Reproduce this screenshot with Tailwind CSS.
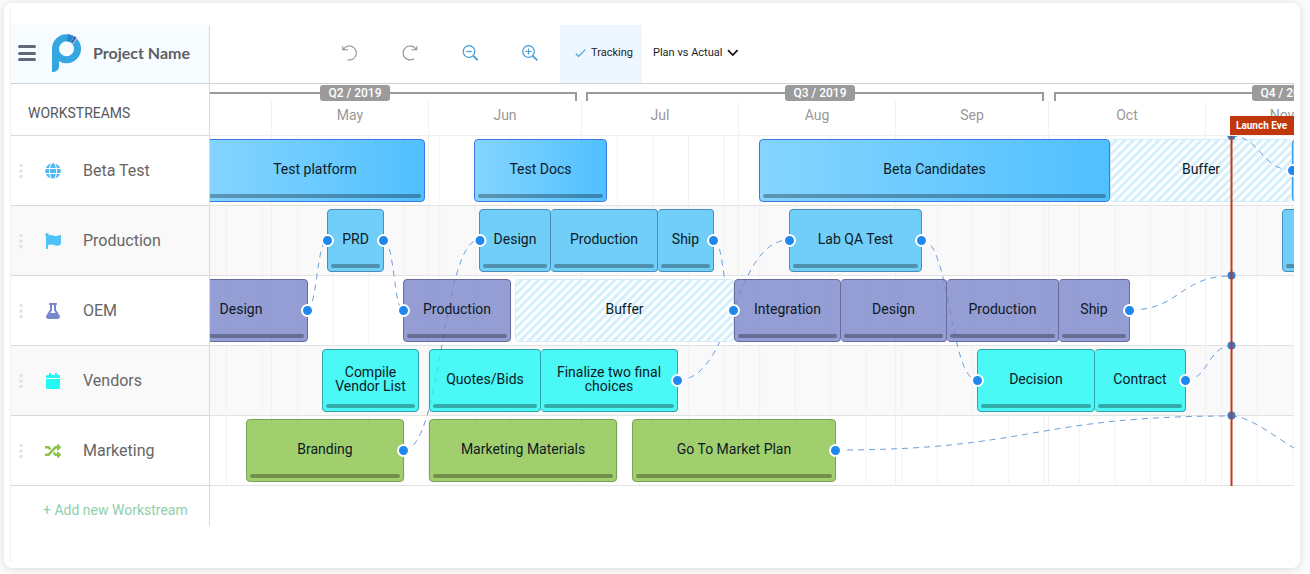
<!DOCTYPE html>
<html lang="en">
<head>
<meta charset="utf-8">
<title>Project Name – Workstreams</title>
<script src="https://cdn.jsdelivr.net/npm/@tailwindcss/browser@4"></script>
</head>
<body class="flex min-h-screen bg-[#fdfdfd] pt-[3px] pr-[10px] pb-[6px] pl-1 font-['Roboto',sans-serif]">
<main class="flex min-w-0 flex-1 rounded-lg bg-white py-[6px] pr-[6px] pl-[6px] shadow-[0_1px_10px_rgba(0,0,0,0.16)]">
<div class="flex min-w-0 flex-1 items-start border-l border-[#efefef] pt-4">

  <!-- Workstream list -->
  <aside class="w-[199px] shrink-0 border-r border-[#d9d9d9]">
    <header class="flex h-[59px] items-center border-b border-[#d0d3d5] bg-[#f6fcff] pb-[2px] pl-[7px]">
      <button type="button" aria-label="Menu" class="flex h-4 w-[18px] flex-col justify-between">
        <span class="h-[3px] w-full rounded-sm bg-[#63697a]"></span>
        <span class="h-[3px] w-full rounded-sm bg-[#63697a]"></span>
        <span class="h-[3px] w-full rounded-sm bg-[#63697a]"></span>
      </button>
      <svg class="ml-4 h-[38px] w-[29px]" viewBox="0 0 29 38" aria-hidden="true">
        <path fill="#36a6e0" d="M0 14.500H7V32C7 36 4 38 0 38Z"/>
        <circle cx="14.500" cy="14.700" r="11" fill="none" stroke="#36a6e0" stroke-width="7"/>
        <path d="M15.500 3.800A11 11 0 0 1 20 5.300" fill="none" stroke="#2a86cc" stroke-width="7"/>
        <path fill="#4c4a9c" d="M24.800 3.800L21.300 9.500L19.200 7.500C21 6.500 22 5 22.300 2.300Z"/>
        <path d="M24.900 3.600L20.600 10.200" stroke="#f6fcff" stroke-width=".8"/>
      </svg>
      <h1 class="ml-3 font-['Lato',sans-serif] text-base font-bold text-[#5e6063]">Project Name</h1>
    </header>
    <h2 class="flex h-[52px] items-center border-b border-[#d9d9d9] pt-[6px] pl-[17px] text-sm text-[#55585c]">WORKSTREAMS</h2>
    <ul class="text-base text-[#666]">
      <li class="flex h-[70px] items-center border-b border-[#d9d9d9] pl-2">
        <svg class="h-4 w-1" viewBox="0 0 4 16" fill="#e3e3e3" aria-hidden="true"><circle cx="2" cy="2.500" r="1.800"/><circle cx="2" cy="8" r="1.800"/><circle cx="2" cy="13.500" r="1.800"/></svg>
        <svg class="ml-[22px] size-4" viewBox="0 0 496 512" fill="#4fb8f5" aria-hidden="true"><path d="M336.500 160C322 70.700 287.800 8 248 8s-74 62.700-88.500 152h177zM152 256c0 22.200 1.200 43.500 3.300 64h185.300c2.100-20.500 3.300-41.800 3.300-64s-1.200-43.500-3.300-64H155.300c-2.100 20.500-3.300 41.800-3.300 64zm324.700-96c-28.600-67.900-86.500-120.400-158-141.600 24.400 33.800 41.200 84.700 50 141.600h108zM177.200 18.400C105.800 39.600 47.800 92.100 19.300 160h108c8.700-56.900 25.500-107.800 49.900-141.600zM487.400 192H372.700c2.100 21 3.300 42.500 3.300 64s-1.200 43-3.300 64h114.600c5.500-20.500 8.600-41.800 8.600-64s-3.100-43.500-8.500-64zM120 256c0-21.500 1.200-43 3.300-64H8.600C3.200 212.500 0 233.800 0 256s3.200 43.500 8.600 64h114.600c-2-21-3.200-42.500-3.200-64zm39.500 96c14.500 89.300 48.700 152 88.500 152s74-62.700 88.500-152h-177zm159.300 141.600c71.400-21.200 129.400-73.700 158-141.600h-108c-8.800 56.900-25.600 107.800-50 141.600zM19.300 352c28.600 67.900 86.500 120.400 158 141.600-24.400-33.800-41.200-84.700-50-141.600h-108z"/></svg>
        <span class="ml-[22px]">Beta Test</span>
      </li>
      <li class="flex h-[70px] items-center border-b border-[#d9d9d9] bg-[#f9f9f9] pl-2">
        <svg class="h-4 w-1" viewBox="0 0 4 16" fill="#e3e3e3" aria-hidden="true"><circle cx="2" cy="2.500" r="1.800"/><circle cx="2" cy="8" r="1.800"/><circle cx="2" cy="13.500" r="1.800"/></svg>
        <svg class="ml-[22px] size-4" viewBox="0 0 512 512" fill="#4fc3f7" aria-hidden="true"><path d="M349.565 98.783C295.978 98.783 251.721 64 184.348 64c-24.955 0-47.309 4.384-68.045 12.013a55.947 55.947 0 0 0 3.586-23.562C118.117 24.015 94.806 1.206 66.338.048 34.345-1.254 8 24.296 8 56c0 19.026 9.497 35.825 24 45.945V488c0 13.255 10.745 24 24 24h16c13.255 0 24-10.745 24-24v-94.400c28.311-12.064 63.582-22.122 114.435-22.122 53.588 0 97.844 34.783 165.217 34.783 48.169 0 86.667-16.294 122.505-40.858C506.840 359.452 512 349.571 512 339.045v-243.100c0-23.393-24.269-38.870-45.485-29.016-34.338 15.948-76.454 31.854-116.950 31.854z"/></svg>
        <span class="ml-[22px]">Production</span>
      </li>
      <li class="flex h-[70px] items-center border-b border-[#d9d9d9] pl-2">
        <svg class="h-4 w-1" viewBox="0 0 4 16" fill="#e3e3e3" aria-hidden="true"><circle cx="2" cy="2.500" r="1.800"/><circle cx="2" cy="8" r="1.800"/><circle cx="2" cy="13.500" r="1.800"/></svg>
        <svg class="ml-[22px] size-4" viewBox="0 0 448 512" fill="#7986cb" aria-hidden="true"><path d="M437.200 403.500L320 215V64h8c13.300 0 24-10.700 24-24V24c0-13.300-10.700-24-24-24H120c-13.300 0-24 10.700-24 24v16c0 13.300 10.700 24 24 24h8v151L10.800 403.500C-18.500 450.600 15.300 512 70.900 512h306.200c55.700 0 89.400-61.500 60.100-108.500zM137.900 320l48.200-77.600c3.700-5.200 5.800-11.600 5.800-18.400V64h64v160c0 6.900 2.200 13.200 5.800 18.400l48.200 77.600h-172z"/></svg>
        <span class="ml-[22px]">OEM</span>
      </li>
      <li class="flex h-[70px] items-center border-b border-[#d9d9d9] bg-[#f9f9f9] pl-2">
        <svg class="h-4 w-1" viewBox="0 0 4 16" fill="#e3e3e3" aria-hidden="true"><circle cx="2" cy="2.500" r="1.800"/><circle cx="2" cy="8" r="1.800"/><circle cx="2" cy="13.500" r="1.800"/></svg>
        <svg class="ml-[22px] size-4" viewBox="0 0 448 512" fill="#22f7f5" aria-hidden="true"><path d="M12 192h424c6.600 0 12 5.400 12 12v260c0 26.500-21.500 48-48 48H48c-26.500 0-48-21.500-48-48V204c0-6.600 5.400-12 12-12zm436-44v-36c0-26.500-21.500-48-48-48h-48V12c0-6.600-5.400-12-12-12h-40c-6.600 0-12 5.400-12 12v52H160V12c0-6.600-5.400-12-12-12h-40c-6.600 0-12 5.400-12 12v52H48C21.500 64 0 85.500 0 112v36c0 6.600 5.400 12 12 12h424c6.600 0 12-5.400 12-12z"/></svg>
        <span class="ml-[22px]">Vendors</span>
      </li>
      <li class="flex h-[70px] items-center border-b border-[#d9d9d9] pl-2">
        <svg class="h-4 w-1" viewBox="0 0 4 16" fill="#e3e3e3" aria-hidden="true"><circle cx="2" cy="2.500" r="1.800"/><circle cx="2" cy="8" r="1.800"/><circle cx="2" cy="13.500" r="1.800"/></svg>
        <svg class="ml-[22px] size-4" viewBox="0 0 512 512" fill="#8bc34a" aria-hidden="true"><path d="M504.971 359.029c9.373 9.373 9.373 24.569 0 33.941l-80 79.984c-15.010 15.010-40.971 4.490-40.971-16.971V416h-58.785a12.004 12.004 0 0 1-8.773-3.812l-70.556-75.596 53.333-57.143L352 336h32v-39.981c0-21.438 25.943-31.998 40.971-16.971l80 79.981zM12 176h84l52.781 56.551 53.333-57.143-70.556-75.596A11.999 11.999 0 0 0 122.785 96H12c-6.627 0-12 5.373-12 12v56c0 6.627 5.373 12 12 12zm372 0v39.984c0 21.460 25.961 31.980 40.971 16.971l80-79.984c9.373-9.373 9.373-24.569 0-33.941l-80-79.981C409.943 24.021 384 34.582 384 56.019V96h-58.785a12.004 12.004 0 0 0-8.773 3.812L96 336H12c-6.627 0-12 5.373-12 12v56c0 6.627 5.373 12 12 12h110.785c3.326 0 6.503-1.381 8.773-3.812L352 176h32z"/></svg>
        <span class="ml-[22px]">Marketing</span>
      </li>
    </ul>
    <div class="flex h-10 items-end pl-8">
      <button type="button" class="pb-[6px] text-sm text-[#8fd0ab]">+ Add new Workstream</button>
    </div>
  </aside>

  <section class="min-w-0 flex-1">
    <!-- Toolbar -->
    <div class="flex h-[59px] border-b border-[#d0d3d5] pl-[110px] text-[11px] text-[#1c2226]">
      <button type="button" aria-label="Undo" class="flex w-[60px] items-center justify-center pb-[2px]">
        <svg class="size-4" viewBox="0 0 16 16" fill="none" stroke="#8d8f92" stroke-width="1.100" aria-hidden="true"><path d="M1.500 4.200A7 7 0 1 1 5.500 14.800M.8 1.200V4.800H6"/></svg>
      </button>
      <button type="button" aria-label="Redo" class="flex w-[60px] items-center justify-center pb-[2px]">
        <svg class="size-4" viewBox="0 0 16 16" fill="none" stroke="#8d8f92" stroke-width="1.100" aria-hidden="true"><path d="M14 4.200A7 7 0 1 0 12 13.800M14.800 1.200V4.800H9.500"/></svg>
      </button>
      <button type="button" aria-label="Zoom out" class="flex w-[60px] items-center justify-center pb-[2px]">
        <svg class="size-4" viewBox="0 0 16 16" fill="none" stroke="#3f9bdc" stroke-width="1.200" aria-hidden="true"><circle cx="7" cy="6.500" r="5.800"/><path d="M4.300 6.500H9.700"/><path d="M11.300 10.800L15.800 15.300" stroke-width="1.700"/></svg>
      </button>
      <button type="button" aria-label="Zoom in" class="flex w-[60px] items-center justify-center pb-[2px]">
        <svg class="size-4" viewBox="0 0 16 16" fill="none" stroke="#3f9bdc" stroke-width="1.200" aria-hidden="true"><circle cx="6.500" cy="6.500" r="5.800"/><path d="M3.500 6.500H9.500M6.500 3.500V9.500"/><path d="M10.800 10.800L15.300 15.300" stroke-width="1.700"/></svg>
      </button>
      <button type="button" aria-pressed="true" class="flex w-[82px] items-center gap-[5px] bg-[#eef7ff] pb-[2px] pl-[15px]">
        <svg class="h-3 w-[11px]" viewBox="0 0 11 12" fill="none" stroke="#4aa3df" stroke-width="1.300" aria-hidden="true"><path d="M.8 6.800L3.600 9.400L10.300 2.600"/></svg>
        Tracking
      </button>
      <label class="flex items-center gap-1 pb-[2px] pl-[11px]">
        <select aria-label="View" class="appearance-none bg-transparent"><option>Plan vs Actual</option></select>
        <svg class="h-2 w-3" viewBox="0 0 12 8" fill="none" stroke="#111" stroke-width="1.700" aria-hidden="true"><path d="M1 1.200L5.800 6L10.600 1.200"/></svg>
      </label>
    </div>

    <div class="relative overflow-hidden">
      <!-- Quarters and months -->
      <div class="flex h-[52px] flex-col overflow-hidden pt-2">
        <div class="flex h-[9px] shrink-0 text-xs font-medium whitespace-nowrap text-white">
          <div class="flex w-[367px] shrink-0 border-t-2 border-r-2 border-[#9b9b9b]"><span class="-mt-[9px] ml-[110px] h-4 w-[70px] rounded-[3px] bg-[#9b9b9b] text-center">Q2 / 2019</span></div>
          <div class="ml-[9px] flex w-[458px] shrink-0 border-x-2 border-t-2 border-[#9b9b9b]"><span class="-mt-[9px] ml-[197px] h-4 w-[70px] rounded-[3px] bg-[#9b9b9b] text-center">Q3 / 2019</span></div>
          <div class="ml-[10px] flex w-[458px] shrink-0 border-x-2 border-t-2 border-[#9b9b9b]"><span class="-mt-[9px] ml-[196px] h-4 w-[70px] rounded-[3px] bg-[#9b9b9b] text-center">Q4 / 2019</span></div>
        </div>
        <div class="flex flex-1 text-center text-sm leading-7 text-[#999]">
          <span class="w-[61px] shrink-0"></span>
          <span class="w-[157px] shrink-0 border-l border-[#f3f3f3]">May</span>
          <span class="w-[153px] shrink-0 border-l border-[#f3f3f3]">Jun</span>
          <span class="w-[157px] shrink-0 border-l border-[#f3f3f3]">Jul</span>
          <span class="w-[157px] shrink-0 border-l border-[#f3f3f3]">Aug</span>
          <span class="w-[153px] shrink-0 border-l border-[#f3f3f3]">Sep</span>
          <span class="w-[157px] shrink-0 border-l border-[#f3f3f3]">Oct</span>
          <span class="w-[153px] shrink-0 border-l border-[#f3f3f3]">Nov</span>
        </div>
      </div>

      <!-- Timeline rows -->
      <div class="relative -mt-px border-t border-[#f0f0f0] text-center text-sm leading-[14px] text-[#0c1a26]">
        <!-- Grid lines and dependency curves, under the bars -->
        <svg class="absolute inset-0 h-full w-full" aria-hidden="true">
          <defs>
            <pattern id="weeks" x="16" width="35.540" height="350" patternUnits="userSpaceOnUse"><path d="M.5 0V350" stroke="#f0f0f0" stroke-opacity=".8"/></pattern>
          </defs>
          <rect width="100%" height="350" fill="url(#weeks)"/>
          <g transform="translate(-210 -136)" fill="none">
            <path stroke="#f1f1f1" d="M271.500 136V486M428.500 136V486M581.500 136V486M738.500 136V486M895.500 136V486M1048.500 136V486M1205.500 136V486"/>
            <g stroke="#6a9fdc" stroke-dasharray="6 5">
              <path d="M307 310C317 310 317 240 327 240"/>
              <path d="M384 240C394 240 394 310 403 310"/>
              <path d="M404 450C442 450 442 240 479 240"/>
              <path d="M714 240C724 240 724 310 734 310"/>
              <path d="M678 380C733 380 733 240 789 240"/>
              <path d="M922 240C950 240 950 380 977 380"/>
              <path d="M1130 310C1180 310 1180 276 1231 276"/>
              <path d="M1186 380C1208 380 1208 346 1231 346"/>
              <path d="M836 450C1033 450 1033 416 1231 416"/>
              <path d="M1231 416C1250 416 1275 437 1294 448L1330 468"/>
            </g>
          </g>
        </svg>

        <div class="flex h-[70px] border-b border-[#e2e2e2] pt-[3px]">
          <div class="relative z-10 -ml-[5px] flex h-[63px] w-[220px] shrink-0 flex-col rounded-[4px] border border-[#3b78e0] bg-linear-to-r from-[#84d5ff] to-[#4fc0ff] px-[3px] pb-[3px]"><span class="flex flex-1 items-center justify-center pt-1">Test platform</span><span class="h-1 rounded-full bg-black/30"></span></div>
          <div class="relative z-10 ml-[49px] flex h-[63px] w-[133px] shrink-0 flex-col rounded-[4px] border border-[#3b78e0] bg-linear-to-r from-[#84d5ff] to-[#4fc0ff] px-[3px] pb-[3px]"><span class="flex flex-1 items-center justify-center pt-1">Test Docs</span><span class="h-1 rounded-full bg-black/30"></span></div>
          <div class="relative z-10 ml-[152px] flex h-[63px] w-[351px] shrink-0 flex-col rounded-[4px] border border-[#3b78e0] bg-linear-to-r from-[#84d5ff] to-[#4fc0ff] px-[3px] pb-[3px]"><span class="flex flex-1 items-center justify-center pt-1">Beta Candidates</span><span class="h-1 rounded-full bg-black/30"></span></div>
          <div class="relative z-10 flex h-[63px] w-[182px] shrink-0 flex-col rounded-[4px] border border-[#d3ecfa] bg-[repeating-linear-gradient(135deg,#fff_0px,#fff_2px,#d3effc_3px,#d3effc_5px,#fff_6px)] px-[3px] pb-[3px]"><span class="flex flex-1 items-center justify-center">Buffer</span></div>
          <div class="relative z-10 h-[63px] w-[120px] shrink-0 rounded-[4px] border border-[#3b9be8] bg-[#84d5ff]"></div>
        </div>

        <div class="flex h-[70px] border-b border-[#e2e2e2] bg-[#f9f9f9] pt-[3px]">
          <div class="relative z-10 ml-[117px] flex h-[63px] w-[57px] shrink-0 flex-col rounded-[4px] border border-[#4590b8] bg-[#4fc3f7]/80 px-[3px] pb-[3px]"><span class="flex flex-1 items-center justify-center pt-1">PRD</span><span class="h-1 rounded-full bg-black/30"></span></div>
          <div class="relative z-10 ml-[95px] flex h-[63px] w-[72px] shrink-0 flex-col rounded-[4px] border border-[#4590b8] bg-[#4fc3f7]/80 px-[3px] pb-[3px]"><span class="flex flex-1 items-center justify-center pt-1">Design</span><span class="h-1 rounded-full bg-black/30"></span></div>
          <div class="relative z-10 flex h-[63px] w-[107px] shrink-0 flex-col rounded-[4px] border border-l-0 border-[#4590b8] bg-[#4fc3f7]/80 px-[3px] pb-[3px]"><span class="flex flex-1 items-center justify-center pt-1">Production</span><span class="h-1 rounded-full bg-black/30"></span></div>
          <div class="relative z-10 flex h-[63px] w-[56px] shrink-0 flex-col rounded-[4px] border border-l-0 border-[#4590b8] bg-[#4fc3f7]/80 px-[3px] pb-[3px]"><span class="flex flex-1 items-center justify-center pt-1">Ship</span><span class="h-1 rounded-full bg-black/30"></span></div>
          <div class="relative z-10 ml-[75px] flex h-[63px] w-[133px] shrink-0 flex-col rounded-[4px] border border-[#4590b8] bg-[#4fc3f7]/80 px-[3px] pb-[3px]"><span class="flex flex-1 items-center justify-center pt-1">Lab QA Test</span><span class="h-1 rounded-full bg-black/30"></span></div>
          <div class="relative z-10 ml-[360px] flex h-[63px] w-[120px] shrink-0 flex-col justify-end rounded-[4px] border border-[#4590b8] bg-[#4fc3f7]/80 px-[3px] pb-[3px]"><span class="h-1 rounded-full bg-black/30"></span></div>
        </div>

        <div class="flex h-[70px] border-b border-[#e2e2e2] pt-[3px]">
          <div class="relative z-10 -ml-[36px] flex h-[63px] w-[134px] shrink-0 flex-col rounded-[4px] border border-[#666c9c] bg-[#7b84cb]/80 px-[3px] pb-[3px]"><span class="flex flex-1 items-center justify-center pt-1">Design</span><span class="h-1 rounded-full bg-black/30"></span></div>
          <div class="relative z-10 ml-[95px] flex h-[63px] w-[108px] shrink-0 flex-col rounded-[4px] border border-[#666c9c] bg-[#7b84cb]/80 px-[3px] pb-[3px]"><span class="flex flex-1 items-center justify-center pt-1">Production</span><span class="h-1 rounded-full bg-black/30"></span></div>
          <div class="relative z-10 ml-1 flex h-[63px] w-[219px] shrink-0 flex-col rounded-[4px] border border-[#d3ecfa] bg-[repeating-linear-gradient(135deg,#fff_0px,#fff_2px,#d3effc_3px,#d3effc_5px,#fff_6px)] px-[3px] pb-[3px]"><span class="flex flex-1 items-center justify-center">Buffer</span></div>
          <div class="relative z-10 flex h-[63px] w-[107px] shrink-0 flex-col rounded-[4px] border border-[#666c9c] bg-[#7b84cb]/80 px-[3px] pb-[3px]"><span class="flex flex-1 items-center justify-center pt-1">Integration</span><span class="h-1 rounded-full bg-black/30"></span></div>
          <div class="relative z-10 flex h-[63px] w-[106px] shrink-0 flex-col rounded-[4px] border border-l-0 border-[#666c9c] bg-[#7b84cb]/80 px-[3px] pb-[3px]"><span class="flex flex-1 items-center justify-center pt-1">Design</span><span class="h-1 rounded-full bg-black/30"></span></div>
          <div class="relative z-10 flex h-[63px] w-[112px] shrink-0 flex-col rounded-[4px] border border-l-0 border-[#666c9c] bg-[#7b84cb]/80 px-[3px] pb-[3px]"><span class="flex flex-1 items-center justify-center pt-1">Production</span><span class="h-1 rounded-full bg-black/30"></span></div>
          <div class="relative z-10 flex h-[63px] w-[71px] shrink-0 flex-col rounded-[4px] border border-l-0 border-[#666c9c] bg-[#7b84cb]/80 px-[3px] pb-[3px]"><span class="flex flex-1 items-center justify-center pt-1">Ship</span><span class="h-1 rounded-full bg-black/30"></span></div>
        </div>

        <div class="flex h-[70px] border-b border-[#e2e2e2] bg-[#f9f9f9] pt-[3px]">
          <div class="relative z-10 ml-[112px] flex h-[63px] w-[97px] shrink-0 flex-col rounded-[4px] border border-[#2fa3a8] bg-[#1ef7f5]/80 px-[3px] pb-[3px]"><span class="flex flex-1 items-center justify-center pt-1">Compile<br>Vendor List</span><span class="h-1 rounded-full bg-black/30"></span></div>
          <div class="relative z-10 ml-[10px] flex h-[63px] w-[112px] shrink-0 flex-col rounded-[4px] border border-[#2fa3a8] bg-[#1ef7f5]/80 px-[3px] pb-[3px]"><span class="flex flex-1 items-center justify-center pt-1">Quotes/Bids</span><span class="h-1 rounded-full bg-black/30"></span></div>
          <div class="relative z-10 flex h-[63px] w-[137px] shrink-0 flex-col rounded-[4px] border border-l-0 border-[#2fa3a8] bg-[#1ef7f5]/80 px-[3px] pb-[3px]"><span class="flex flex-1 items-center justify-center pt-1">Finalize two final<br>choices</span><span class="h-1 rounded-full bg-black/30"></span></div>
          <div class="relative z-10 ml-[299px] flex h-[63px] w-[118px] shrink-0 flex-col rounded-[4px] border border-[#2fa3a8] bg-[#1ef7f5]/80 px-[3px] pb-[3px]"><span class="flex flex-1 items-center justify-center pt-1">Decision</span><span class="h-1 rounded-full bg-black/30"></span></div>
          <div class="relative z-10 flex h-[63px] w-[91px] shrink-0 flex-col rounded-[4px] border border-l-0 border-[#2fa3a8] bg-[#1ef7f5]/80 px-[3px] pb-[3px]"><span class="flex flex-1 items-center justify-center pt-1">Contract</span><span class="h-1 rounded-full bg-black/30"></span></div>
        </div>

        <div class="flex h-[70px] border-b border-[#e2e2e2] pt-[3px]">
          <div class="relative z-10 ml-[36px] flex h-[63px] w-[158px] shrink-0 flex-col rounded-[4px] border border-[#7aa05a] bg-[#8bc34a]/80 px-[3px] pb-[3px]"><span class="flex flex-1 items-center justify-center pt-1">Branding</span><span class="h-1 rounded-full bg-black/30"></span></div>
          <div class="relative z-10 ml-[25px] flex h-[63px] w-[188px] shrink-0 flex-col rounded-[4px] border border-[#7aa05a] bg-[#8bc34a]/80 px-[3px] pb-[3px]"><span class="flex flex-1 items-center justify-center pt-1">Marketing Materials</span><span class="h-1 rounded-full bg-black/30"></span></div>
          <div class="relative z-10 ml-[15px] flex h-[63px] w-[204px] shrink-0 flex-col rounded-[4px] border border-[#7aa05a] bg-[#8bc34a]/80 px-[3px] pb-[3px]"><span class="flex flex-1 items-center justify-center pt-1">Go To Market Plan</span><span class="h-1 rounded-full bg-black/30"></span></div>
        </div>

        <!-- Connector dots and launch line, over the bars -->
        <svg class="pointer-events-none absolute inset-0 z-20 h-full w-full" aria-hidden="true">
          <g transform="translate(-210 -136)">
            <path d="M1231 136C1261 136 1261 170 1292 170" fill="none" stroke="#6a9fdc" stroke-dasharray="6 5"/>
            <g fill="#1e88ee" stroke="#fff" stroke-width="2">
              <circle cx="327.500" cy="240.500" r="5.500"/><circle cx="383.500" cy="240.500" r="5.500"/>
              <circle cx="480" cy="240.500" r="5.500"/><circle cx="713.500" cy="240.500" r="5.500"/>
              <circle cx="789.500" cy="240.500" r="5.500"/><circle cx="921.500" cy="240.500" r="5.500"/>
              <circle cx="307.500" cy="310.500" r="5.500"/><circle cx="403.500" cy="310.500" r="5.500"/>
              <circle cx="733.500" cy="310.500" r="5.500"/><circle cx="1129.500" cy="310.500" r="5.500"/>
              <circle cx="677.500" cy="380.500" r="5.500"/><circle cx="977.500" cy="380.500" r="5.500"/>
              <circle cx="1185.500" cy="380.500" r="5.500"/><circle cx="403.500" cy="450.500" r="5.500"/>
              <circle cx="835.500" cy="450.500" r="5.500"/><circle cx="1292.500" cy="170.500" r="5.500"/>
            </g>
            <g fill="#2f80d8">
              <circle cx="1231.500" cy="136" r="4"/><circle cx="1231.500" cy="275.500" r="4"/>
              <circle cx="1231.500" cy="345.500" r="4"/><circle cx="1231.500" cy="415.500" r="4"/>
            </g>
            <path d="M1231.500 130V486" stroke="#c23a14" stroke-width="2"/>
          </g>
        </svg>
      </div>

      <!-- Launch event flag -->
      <div class="absolute top-8 left-[1020px] z-30 h-[19px] w-[120px] bg-[#c0370c] pl-[6px] text-[10px] leading-[19px] font-bold text-white">Launch Eve</div>
    </div>
  </section>
</div>
</main>
</body>
</html>
